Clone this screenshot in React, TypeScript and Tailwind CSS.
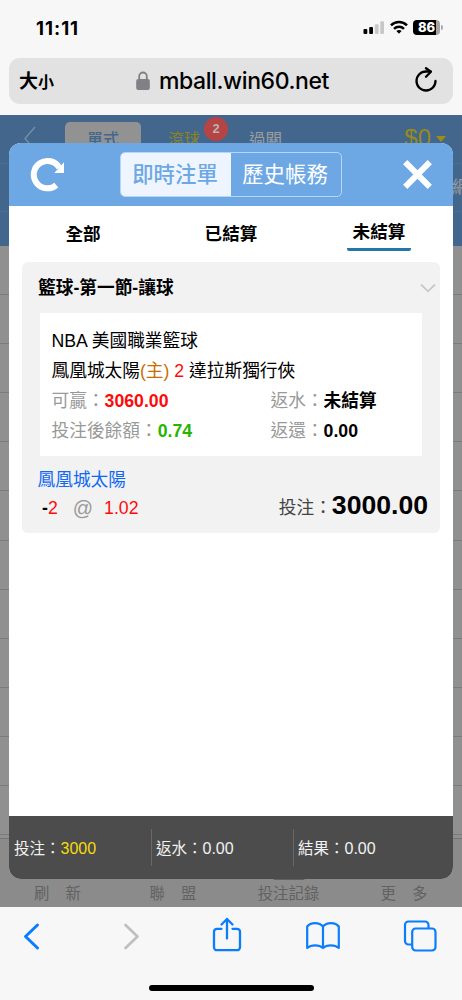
import { useState } from "react";

const headerTabs = ["即時注單", "歷史帳務"];

const filters = [
  { key: "all", label: "全部" },
  { key: "settled", label: "已結算" },
  { key: "open", label: "未結算" },
];

const totals = [
  { label: "投注：", value: "3000", highlight: true },
  { label: "返水：", value: "0.00", highlight: false },
  { label: "結果：", value: "0.00", highlight: false },
];

const rows = Array.from({ length: 12 }, (_, i) => i);

function StatusBar() {
  return (
    <div className="flex h-[58px] items-start justify-between pl-9 pr-[19px] pt-[17px]">
      <span className="font-['Inter',sans-serif] text-[18.5px] font-bold leading-[22px] tracking-[1px] text-black">
        11:11
      </span>
      <div className="flex items-center gap-[5px] pt-[2px]">
        <svg width="22" height="16" viewBox="0 0 22 16">
          <rect x="0.5" y="10" width="3.8" height="5" rx="1" fill="#000" />
          <rect x="6.2" y="8" width="3.8" height="7" rx="1" fill="#000" />
          <rect x="11.8" y="5.2" width="3.8" height="9.8" rx="1" fill="#c8c8c8" />
          <rect x="17.2" y="2.3" width="3.8" height="12.7" rx="1" fill="#c8c8c8" />
        </svg>
        <svg width="18" height="16" viewBox="0 0 18 16" fill="none" stroke="#000" strokeWidth="2.5">
          <path d="M1 6.4a11.4 11.4 0 0 1 16 0" />
          <path d="M4 9.8a7.2 7.2 0 0 1 10 0" />
          <path d="M9 14.8 6.4 12.1a3.8 3.8 0 0 1 5.2 0z" fill="#000" stroke="none" />
        </svg>
        <div className="flex items-center gap-px">
          <div className="flex h-[15px] w-[27px] items-center justify-center rounded-[4px] bg-linear-to-r from-black from-86% to-[#a5a5a5] to-86% font-['Inter',sans-serif] text-[13px] font-extrabold leading-none text-white">
            86
          </div>
          <div className="h-[5px] w-[2px] rounded-r-full bg-[#aaa]" />
        </div>
      </div>
    </div>
  );
}

function AddressBar() {
  return (
    <div className="mx-[9px] flex h-[46px] items-center justify-between rounded-[11px] bg-[#e2e2e2] pl-[10px] pr-[15px] text-black">
      <div className="flex w-[60px] items-baseline pt-[3px] font-bold leading-6">
        <span className="text-[19px]">大</span>
        <span className="text-[16px]">小</span>
      </div>
      <div className="flex items-center gap-[9px] pl-[3px]">
        <svg width="14" height="20" viewBox="0 0 14 20">
          <path d="M3.2 9V5.3a3.8 3.8 0 0 1 7.6 0V9" fill="none" stroke="#808085" strokeWidth="1.8" />
          <rect x="0.2" y="8" width="13.6" height="11" rx="2" fill="#808085" />
        </svg>
        <span className="font-['Inter',sans-serif] text-[23px] font-medium leading-7 tracking-[-0.4px]">
          mball.win60.net
        </span>
      </div>
      <div className="flex w-[55px] justify-end">
        <svg width="24" height="28" viewBox="0 0 24 28" fill="none" stroke="#000" strokeWidth="2.3" strokeLinecap="round" strokeLinejoin="round">
          <path d="M21.5 14a9.5 9.5 0 1 1-9.5-9.5h4.5" />
          <path d="m12 1.200 4.900 3.600-4.900 4.900" />
        </svg>
      </div>
    </div>
  );
}

/* Betting page behind the dialog */
function Backdrop() {
  return (
    <div className="flex h-full flex-col bg-[#909090] text-[#9a9da1]">
      <div className="h-12 bg-[#43678c]">
        <div className="flex h-full">
          <svg className="ml-[23px] mt-[11px]" width="13" height="25" viewBox="0 0 13 25" fill="none" stroke="#7890aa" strokeWidth="1.3">
            <path d="M12 1 2 12.5 12 24" />
          </svg>
          <div className="ml-[29px] mt-[7px] h-[34px] w-[76px] rounded-[5px] bg-[#929292] pt-[6px] text-center text-[16px] font-medium leading-6 text-[#43678c]">
            單式
          </div>
          <div className="relative ml-[27px] mt-[13px] text-[16px] leading-6 text-[#8c8220]">
            滾球
            <span className="absolute -top-[11px] left-[36px] flex size-6 items-center justify-center rounded-full bg-[#b64444] text-[13px] font-bold text-[#b5b5b5]">
              2
            </span>
          </div>
          <div className="ml-[49px] mt-[13px] text-[16.5px] leading-6">過關</div>
          <div className="ml-auto mr-[16px] mt-[8px] flex gap-[5px] text-[24px] leading-[30px] text-[#978a18]">
            $0
            <svg className="mt-[13px]" width="10" height="6" viewBox="0 0 10 6">
              <path d="M0 0h10L5 6z" fill="#a08c10" />
            </svg>
          </div>
        </div>
      </div>
      <div className="flex h-[49px] items-center justify-end overflow-hidden border-y border-[#4b6f94] bg-[#43678c] text-[17px]">
        <span className="-mr-[7px]">網</span>
      </div>
      <div className="h-[34px] bg-[#43678c]" />
      {rows.map((row) => (
        <div key={row} className="h-[49.1px] shrink-0 border-b border-[#7b7b7b]" />
      ))}
      <div className="mt-[3px] flex flex-1 items-end border-t border-[#747474] bg-[#8b8b8b] pb-[2px] text-[15.4px] leading-[22px] text-[#626262]">
        <div className="flex w-[115px] justify-center gap-4">
          <span>刷</span>
          <span>新</span>
        </div>
        <div className="flex w-[116px] justify-center gap-4">
          <span>聯</span>
          <span>盟</span>
        </div>
        <div className="flex w-[115px] flex-col items-center">
          <div className="mb-[3px] h-[2px] w-8 rounded-b bg-[#606060]" />
          <span>投注記錄</span>
        </div>
        <div className="flex w-[116px] justify-center gap-4">
          <span>更</span>
          <span>多</span>
        </div>
      </div>
    </div>
  );
}

function BetCard() {
  return (
    <div className="mx-[13px] h-[271px] rounded-[6px] bg-[#f2f2f2] text-[17.7px] text-black">
      <div className="flex h-[51px] items-center justify-between pl-[16px] pr-[4px] pt-px font-bold">
        <span>籃球-第一節-讓球</span>
        <svg width="16" height="10" viewBox="0 0 16 10" fill="none" stroke="#c8c8c8" strokeWidth="1.8">
          <path d="m1 1.5 7 6.8 7-6.8" />
        </svg>
      </div>
      <div className="mx-[18px] flex h-[143px] flex-col bg-white pl-[11.5px] pt-[13px] leading-[30px]">
        <div>NBA 美國職業籃球</div>
        <div>
          鳳凰城太陽<span className="text-[#c86e00]">(主)</span> <span className="text-[#ff0a0a]">2</span> 達拉斯獨行俠
        </div>
        <div className="flex text-[#999]">
          <div className="w-[219px]">
            可贏：<b className="text-[#ff0a0a]">3060.00</b>
          </div>
          <div>
            返水：<b className="text-black">未結算</b>
          </div>
        </div>
        <div className="flex text-[#999]">
          <div className="w-[219px]">
            投注後餘額：<b className="text-[#27b500]">0.74</b>
          </div>
          <div>
            返還：<b className="text-black">0.00</b>
          </div>
        </div>
      </div>
      <div className="pl-[15.5px] pt-[10px] leading-[28px] text-[#1068f5]">鳳凰城太陽</div>
      <div className="flex h-7 items-center justify-between pl-[20px] pr-[12px]">
        <div className="flex items-center pt-px text-[#ff0a0a]">
          <span className="font-bold text-black">-</span>
          <span>2</span>
          <span className="-mt-[2px] ml-[15px] text-[20px] text-[#999]">@</span>
          <span className="ml-[11px]">1.02</span>
        </div>
        <div className="flex items-center text-[#444]">
          <span>投注：</span>
          <b className="-mt-[5px] text-[26.6px] text-black">3000.00</b>
        </div>
      </div>
    </div>
  );
}

function BetDialog() {
  const [tab, setTab] = useState("即時注單");
  const [filter, setFilter] = useState("open");

  return (
    <div className="absolute left-[9px] top-7 flex h-[736px] w-[444px] flex-col overflow-hidden rounded-[12px] bg-white">
      <div className="flex h-[63px] shrink-0 items-center bg-[#6da8e5] pl-[21px]">
        <button>
          <svg width="35" height="35" viewBox="0 0 35 35">
            <path d="M26.3 28.1A13.7 13.7 0 1 1 29.3 10.700" fill="none" stroke="#fff" strokeWidth="6" />
            <path d="M34 5.300v10.600H24.300z" fill="#fff" />
          </svg>
        </button>
        <div className="ml-[55px] flex h-[45px] w-[222px] overflow-hidden rounded-[5px] border border-[#b7d6f6]">
          {headerTabs.map((label) => (
            <button
              key={label}
              onClick={() => setTab(label)}
              className={`w-1/2 pr-[2px] text-[21.4px] leading-[45px] ${
                tab === label ? "bg-[#eff5fe] font-medium text-[#6da8e5]" : "text-white"
              }`}
            >
              {label}
            </button>
          ))}
        </div>
        <button className="ml-[61px]">
          <svg width="29" height="29" viewBox="0 0 29 29" stroke="#fff" strokeWidth="6">
            <path d="m2.2 2.2 24.6 24.6M26.8 2.2 2.2 26.8" />
          </svg>
        </button>
      </div>

      {/* Settlement filter */}
      <div className="flex h-[56px] shrink-0 text-[17.6px] font-bold text-black">
        {filters.map((f) => (
          <button
            key={f.key}
            onClick={() => setFilter(f.key)}
            className="flex w-1/3 justify-center"
          >
            <span
              className={`h-[45px] px-[6px] ${
                filter === f.key ? "rounded-[2px] border-b-[3px] border-[#2577a8] leading-[52px]" : "leading-[56px]"
              }`}
            >
              {f.label}
            </span>
          </button>
        ))}
      </div>

      <BetCard />

      <div className="mt-auto flex h-[63px] shrink-0 items-center bg-[#4c4c4c] text-[15.5px] text-[#f2f2f2]">
        {totals.map((item, i) => (
          <div
            key={item.label}
            className={`flex h-[37px] w-[142px] items-center pt-[2px] ${i > 0 ? "border-l border-[#686868] pl-[4px]" : "pl-[5px]"}`}
          >
            {item.label}
            <span className={item.highlight ? "text-[16px] text-[#f5dc0a]" : "text-[16px]"}>{item.value}</span>
          </div>
        ))}
      </div>
    </div>
  );
}

function BrowserToolbar() {
  return (
    <div className="flex h-[93px] flex-col items-center justify-between bg-[#f7f7f7] pb-[9px] pt-[9px]">
      <div className="flex w-full items-center pl-[23px]">
        <svg width="18" height="40" viewBox="0 0 18 40" fill="none" stroke="#0a7dff" strokeWidth="3" strokeLinecap="round" strokeLinejoin="round">
          <path d="M14.5 9 2.5 20.5l12 11.5" />
        </svg>
        <svg className="ml-[82px]" width="18" height="40" viewBox="0 0 18 40" fill="none" stroke="#bfbfbf" strokeWidth="2.7" strokeLinecap="round" strokeLinejoin="round">
          <path d="m2.5 9 12 11.5-12 11.5" />
        </svg>
        <svg className="ml-[71px]" width="30" height="40" viewBox="0 0 30 40" fill="none" stroke="#0a7dff" strokeWidth="2.3" strokeLinecap="round" strokeLinejoin="round">
          <path d="M9.5 12.8H5a3 3 0 0 0-3 3v15.4a3 3 0 0 0 3 3h20a3 3 0 0 0 3-3V15.8a3 3 0 0 0-3-3h-4.5" />
          <path d="M15 22.5V3M9.5 8.5 15 3l5.5 5.5" />
        </svg>
        <svg className="ml-[63px]" width="36" height="40" viewBox="0 0 36 40" fill="none" stroke="#0a7dff" strokeWidth="2.2" strokeLinecap="round" strokeLinejoin="round">
          <path d="M18 10.5C14.5 6 5.5 6 2.2 10.5V32c4-3.5 12-3.5 15.8 0V10.5C21.5 6 30.5 6 33.8 10.5V32c-4-3.5-12-3.5-15.8 0" />
        </svg>
        <svg className="ml-[62px]" width="34" height="40" viewBox="0 0 34 40" fill="none" stroke="#0a7dff" strokeWidth="2.2" strokeLinejoin="round">
          <path d="M9 28.5H5.5A3.5 3.5 0 0 1 2 25V9a3.5 3.5 0 0 1 3.5-3.5H22A3.5 3.5 0 0 1 25.5 9v3.5" />
          <rect x="9.2" y="12.5" width="23.3" height="22" rx="3.5" />
        </svg>
      </div>
      <div className="h-[6px] w-[165px] rounded-full bg-black" />
    </div>
  );
}

export default function App() {
  return (
    <div className="flex h-[1000px] w-[462px] flex-col overflow-hidden bg-[#f7f7f7] font-['Liberation_Sans','Noto_Sans_CJK_TC',sans-serif]">
      <StatusBar />
      <AddressBar />
      <div className="relative mt-[11px] h-[792px]">
        <Backdrop />
        <BetDialog />
      </div>
      <BrowserToolbar />
    </div>
  );
}
